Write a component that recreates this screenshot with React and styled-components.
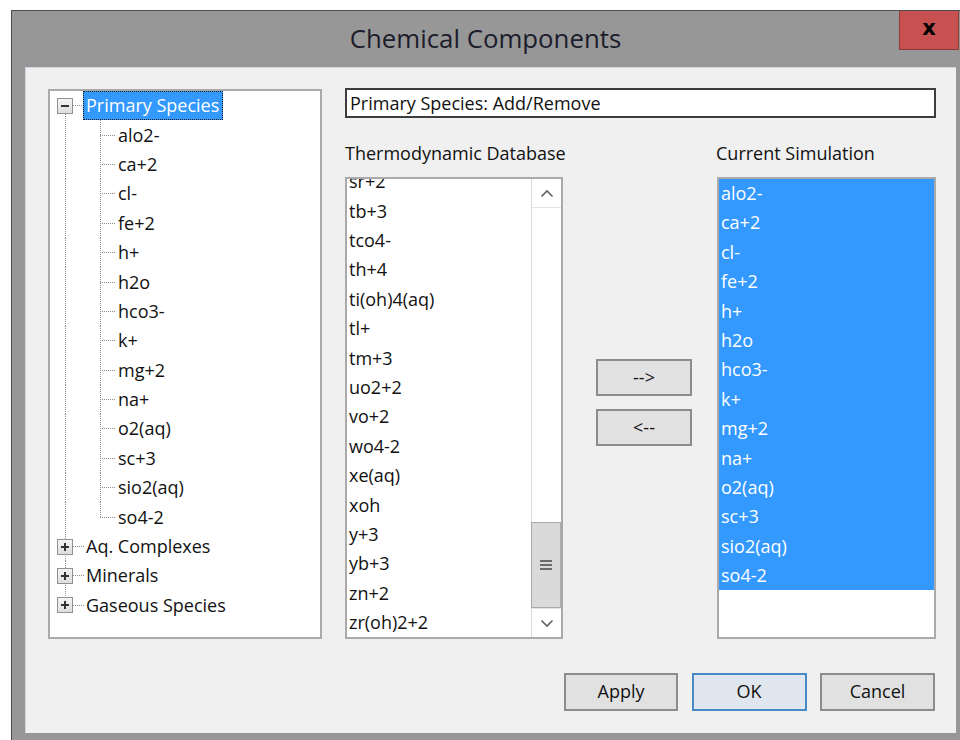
import React from "react";
import styled, { createGlobalStyle } from "styled-components";

const ROW = 29.4;

const GlobalStyle = createGlobalStyle`
  html, body {
    margin: 0;
    padding: 0;
    background: #ffffff;
    overflow: hidden;
  }
  body {
    font-family: "Open Sans", "Noto Sans", sans-serif;
    color: #111;
  }
`;

const primarySpecies = [
  "alo2-", "ca+2", "cl-", "fe+2", "h+", "h2o", "hco3-", "k+",
  "mg+2", "na+", "o2(aq)", "sc+3", "sio2(aq)", "so4-2",
];

const databaseSpecies = [
  "sr+2", "tb+3", "tco4-", "th+4", "ti(oh)4(aq)", "tl+", "tm+3", "uo2+2",
  "vo+2", "wo4-2", "xe(aq)", "xoh", "y+3", "yb+3", "zn+2", "zr(oh)2+2",
];

const collapsedGroups = ["Aq. Complexes", "Minerals", "Gaseous Species"];

/* ---------- window frame ---------- */

const Window = styled.div`
  margin: 10px 0 0 11px;
  width: 955px;
  height: 760px;
  box-sizing: border-box;
  background: #979797;
  border: 1px solid #4d4d4d;
  display: flex;
  flex-direction: column;
`;

const TitleBar = styled.div`
  height: 56px;
  flex: none;
  display: grid;
  grid-template-columns: 1fr auto 1fr;
  align-items: center;
  padding-right: 6px;
`;

const Title = styled.div`
  grid-column: 2;
  font-size: 25.8px;
  color: #1c1c2c;
  padding-bottom: 2px;
`;

const CloseButton = styled.div`
  grid-column: 3;
  justify-self: end;
  align-self: start;
  width: 60px;
  height: 39px;
  box-sizing: border-box;
  background: #c75050;
  border: 1px solid #8e3b3b;
  border-top: none;
  display: flex;
  align-items: center;
  justify-content: center;
  font-family: "DejaVu Sans", sans-serif;
  font-weight: 700;
  font-size: 21px;
  color: #000;
  padding-bottom: 4px;
`;

const Client = styled.div`
  margin-left: 13px;
  width: 931px;
  height: 666px;
  box-sizing: border-box;
  background: #f0f0f0;
  border-top: 1px solid #cfd6df;
  border-left: 1px solid #cfd6df;
  display: flex;
  flex-direction: column;
`;

const Body = styled.div`
  display: flex;
  padding: 21px 0 0 22px;
`;

/* ---------- tree view ---------- */

const Tree = styled.div`
  width: 274px;
  height: 550px;
  box-sizing: border-box;
  background: #fff;
  border: 2px solid #aaaaaa;
  font-size: 18px;
`;

const TreeRow = styled.div`
  display: flex;
  height: ${ROW}px;
`;

const dotV = "repeating-linear-gradient(to bottom, #8c8c8c 0 1px, transparent 1px 2px)";
const dotH = "repeating-linear-gradient(to right, #8c8c8c 0 1px, transparent 1px 2px)";

const guideBackground = ({ $x, $w, $up, $down, $right }) => {
  const images = [];
  const sizes = [];
  const positions = [];
  if ($up && $down) {
    images.push(dotV);
    sizes.push("1px 100%");
    positions.push(`${$x}px 0`);
  } else if ($up) {
    images.push(dotV);
    sizes.push("1px 50%");
    positions.push(`${$x}px 0`);
  } else if ($down) {
    images.push(dotV);
    sizes.push("1px 50%");
    positions.push(`${$x}px 100%`);
  }
  if ($right) {
    images.push(dotH);
    sizes.push(`${$w - $x}px 1px`);
    positions.push(`${$x}px 50%`);
  }
  if (!images.length) return "";
  return `
    background-image: ${images.join(", ")};
    background-size: ${sizes.join(", ")};
    background-position: ${positions.join(", ")};
    background-repeat: no-repeat;
  `;
};

const Guide = styled.span`
  flex: none;
  width: ${(p) => p.$w}px;
  display: flex;
  align-items: center;
  ${guideBackground}
`;

const Expander = styled.span`
  width: 16px;
  height: 16px;
  margin-left: ${(p) => p.$x - 8}px;
  box-sizing: border-box;
  border: 1px solid #919191;
  background: linear-gradient(#f4f4f4, #dedede);
  display: flex;
  align-items: center;
  justify-content: center;
`;

const ExpanderBar = styled.span`
  position: relative;
  width: 8px;
  height: 2px;
  background: #333;

  ${(p) =>
    p.$plus &&
    `
    &::after {
      content: "";
      position: absolute;
      left: 3px;
      top: -3px;
      width: 2px;
      height: 8px;
      background: #333;
    }
  `}
`;

const NodeLabel = styled.span`
  height: ${ROW}px;
  box-sizing: border-box;
  display: flex;
  align-items: center;
  padding: 0 3px 1px 2px;
  white-space: nowrap;
  border: 1px ${(p) => (p.$selected ? "dotted #1a1a1a" : "solid transparent")};
  margin-left: -1px;
  background: ${(p) => (p.$selected ? "#3399ff" : "transparent")};
  color: ${(p) => (p.$selected ? "#fff" : "#111")};
`;

const ROOT_X = 15;
const ROOT_W = 34;
const CHILD_X = 16;
const CHILD_W = 32;

const SpeciesTree = () => (
  <Tree>
    <TreeRow>
      <Guide $w={ROOT_W} $x={ROOT_X} $down $right>
        <Expander $x={ROOT_X}>
          <ExpanderBar />
        </Expander>
      </Guide>
      <NodeLabel $selected>Primary Species</NodeLabel>
    </TreeRow>
    {primarySpecies.map((name, i) => (
      <TreeRow key={name}>
        <Guide $w={ROOT_W} $x={ROOT_X} $up $down />
        <Guide
          $w={CHILD_W}
          $x={CHILD_X}
          $up
          $down={i < primarySpecies.length - 1}
          $right
        />
        <NodeLabel>{name}</NodeLabel>
      </TreeRow>
    ))}
    {collapsedGroups.map((name, i) => (
      <TreeRow key={name}>
        <Guide
          $w={ROOT_W}
          $x={ROOT_X}
          $up
          $down={i < collapsedGroups.length - 1}
          $right
        >
          <Expander $x={ROOT_X}>
            <ExpanderBar $plus />
          </Expander>
        </Guide>
        <NodeLabel>{name}</NodeLabel>
      </TreeRow>
    ))}
  </Tree>
);

/* ---------- right side ---------- */

const Panel = styled.div`
  width: 591px;
  margin-left: 23px;
  display: flex;
  flex-direction: column;
`;

const Heading = styled.div`
  margin-top: -1px;
  height: 30px;
  box-sizing: border-box;
  background: #fff;
  border: 2px solid #3d3d3d;
  padding-left: 3px;
  font-size: 18px;
  display: flex;
  align-items: center;
  padding-bottom: 1px;
`;

const Columns = styled.div`
  margin-top: 23px;
  display: grid;
  grid-template-columns: 218px 1fr 219px;
  grid-template-rows: 24px 462px;
  row-gap: 12px;
`;

const ColumnLabel = styled.div`
  grid-column: ${(p) => p.$col};
  font-size: 18px;
  line-height: 24px;
  white-space: nowrap;
  margin-left: ${(p) => (p.$col === 3 ? -1 : 0)}px;
`;

const ListBox = styled.div`
  grid-column: ${(p) => p.$col};
  box-sizing: border-box;
  background: #fff;
  border: 2px solid #aaaaaa;
  display: flex;
  overflow: hidden;
  font-size: 18px;
`;

const ListViewport = styled.div`
  flex: 1;
  overflow: hidden;
`;

const ListItems = styled.div`
  margin-top: ${(p) => p.$offset || 0}px;
`;

const ListItem = styled.div`
  height: ${ROW}px;
  line-height: ${ROW - 1}px;
  padding-left: 2px;
  white-space: nowrap;
  background: ${(p) => (p.$selected ? "#3399ff" : "transparent")};
  color: ${(p) => (p.$selected ? "#fff" : "#111")};
`;

/* ---------- scrollbar ---------- */

const ScrollBar = styled.div`
  width: 30px;
  flex: none;
  box-sizing: border-box;
  border-left: 1px solid #dcdcdc;
  background: #fff;
  display: flex;
  flex-direction: column;
`;

const ScrollArrow = styled.div`
  height: 28px;
  flex: none;
  display: flex;
  align-items: center;
  justify-content: center;
  border-${(p) => (p.$down ? "top" : "bottom")}: 1px solid #e4e4e4;
`;

const ScrollTrack = styled.div`
  flex: 1;
  display: flex;
  flex-direction: column;
  justify-content: flex-end;
`;

const ScrollThumb = styled.div`
  height: 86px;
  box-sizing: border-box;
  margin-left: -1px;
  background: #dadada;
  border: 1px solid #ababab;
  display: flex;
  flex-direction: column;
  align-items: center;
  justify-content: center;
  gap: 2px;
`;

const GripLine = styled.span`
  width: 12px;
  height: 2px;
  background: #6b6b6b;
`;

const Chevron = ({ down }) => (
  <svg width="14" height="9" viewBox="0 0 14 9">
    <path
      d={down ? "M1.5 1.5 L7 7 L12.5 1.5" : "M1.5 7.5 L7 2 L12.5 7.5"}
      fill="none"
      stroke="#606060"
      strokeWidth="1.6"
    />
  </svg>
);

/* ---------- buttons ---------- */

const MoveButtons = styled.div`
  grid-column: 2;
  justify-self: center;
  margin-left: 8px;
  padding-top: 182px;
  display: flex;
  flex-direction: column;
  gap: 13px;
`;

const Button = styled.button`
  width: ${(p) => p.$w}px;
  height: ${(p) => p.$h}px;
  box-sizing: border-box;
  padding: 0 0 2px;
  font-family: "Open Sans", "Noto Sans", sans-serif;
  font-size: 18px;
  color: #111;
  background: ${(p) => (p.$default ? "#e0e6ed" : "#e1e1e1")};
  border: 2px solid ${(p) => (p.$default ? "#4a8ac4" : "#8c8c8c")};
  border-radius: 0;
`;

const Footer = styled.div`
  margin-top: 34px;
  padding-right: 21px;
  display: flex;
  justify-content: flex-end;
  gap: 13.5px;
`;

const App = () => (
  <>
    <GlobalStyle />
    <Window>
      <TitleBar>
        <Title>Chemical Components</Title>
        <CloseButton>x</CloseButton>
      </TitleBar>
      <Client>
        <Body>
          <SpeciesTree />
          <Panel>
            <Heading>Primary Species: Add/Remove</Heading>
            <Columns>
              <ColumnLabel $col={1}>Thermodynamic Database</ColumnLabel>
              <ColumnLabel $col={3}>Current Simulation</ColumnLabel>

              <ListBox $col={1}>
                <ListViewport>
                  <ListItems $offset={-11.7}>
                    {databaseSpecies.map((name) => (
                      <ListItem key={name}>{name}</ListItem>
                    ))}
                  </ListItems>
                </ListViewport>
                <ScrollBar>
                  <ScrollArrow>
                    <Chevron />
                  </ScrollArrow>
                  <ScrollTrack>
                    <ScrollThumb>
                      <GripLine />
                      <GripLine />
                      <GripLine />
                    </ScrollThumb>
                  </ScrollTrack>
                  <ScrollArrow $down>
                    <Chevron down />
                  </ScrollArrow>
                </ScrollBar>
              </ListBox>

              <MoveButtons>
                <Button $w={96} $h={37}>--&gt;</Button>
                <Button $w={96} $h={37}>&lt;--</Button>
              </MoveButtons>

              <ListBox $col={3}>
                <ListViewport>
                  <ListItems>
                    {primarySpecies.map((name) => (
                      <ListItem key={name} $selected>
                        {name}
                      </ListItem>
                    ))}
                  </ListItems>
                </ListViewport>
              </ListBox>
            </Columns>
          </Panel>
        </Body>
        <Footer>
          <Button $w={114} $h={38}>Apply</Button>
          <Button $w={115} $h={38} $default>OK</Button>
          <Button $w={115} $h={38}>Cancel</Button>
        </Footer>
      </Client>
    </Window>
  </>
);

export default App;
